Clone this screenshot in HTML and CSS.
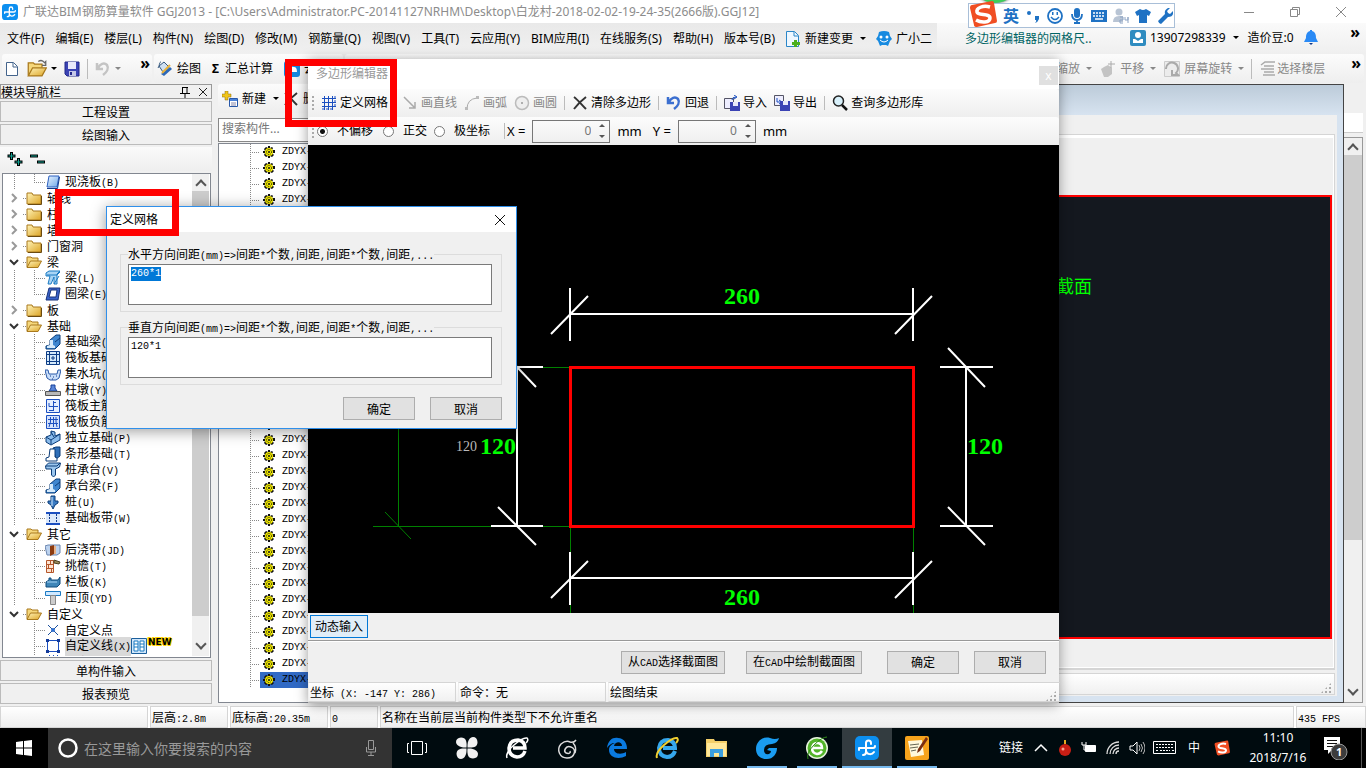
FILE: index.html
```html
<!DOCTYPE html>
<html lang="zh-CN">
<head>
<meta charset="utf-8">
<title>广联达BIM钢筋算量软件 GGJ2013</title>
<link rel="stylesheet" href="styles.css">
</head>
<body>
<svg class="defs" aria-hidden="true">
  <linearGradient id="gBlue" x1="0" y1="0" x2="1" y2="1"><stop offset="0" stop-color="#e8f3ff"/><stop offset="1" stop-color="#6fa8e8"/></linearGradient>
  <linearGradient id="gFold" x1="0" y1="0" x2="1" y2="1"><stop offset="0" stop-color="#fff3b8"/><stop offset="1" stop-color="#dda526"/></linearGradient>
  <symbol id="folder" viewBox="0 0 16 16"><path d="M1 3h5l1 2h8v9H1z" fill="url(#gFold)" stroke="#a9791c"/><path d="M2 14.5h13.5V6" fill="none" stroke="#6b4a10"/></symbol>
  <symbol id="folder-open" viewBox="0 0 16 16"><path d="M1 13V3h4l1 1h6v3" fill="#f5d77b" stroke="#a9791c"/><path d="M1 13.5 4.500 7H15.500L12 13.500z" fill="url(#gFold)" stroke="#a9791c"/></symbol>
  <symbol id="slab" viewBox="0 0 16 16"><path d="M4 2h10l-2 11H2z" fill="url(#gBlue)" stroke="#2a5fc0"/><path d="M2 14.500h10.500L14.500 3" fill="none" stroke="#123a8a"/></symbol>
  <symbol id="beam" viewBox="0 0 16 16"><path d="M1 3l3-2h11l-3 3v10H9V7L6 14H3l2-8H1z" fill="#a8d4f5" stroke="#1b7ac2"/><path d="M2 5h10l3-3M9 14l5-8" stroke="#1b7ac2" fill="none"/></symbol>
  <symbol id="ring" viewBox="0 0 16 16"><path d="M4 2h11l-2 12H1z" fill="#3a62c8" stroke="#16327c"/><path d="M6 4h6l-1 7H4z" fill="#fff" stroke="#16327c"/></symbol>
  <symbol id="found" viewBox="0 0 16 16"><path d="M1 15v-3l4-1V6l6-5h4v9l-5 5z" fill="#3f86cf" stroke="#0b3c78"/><path d="M2 14v-2l3-1V6h3v5l2 1v2z" fill="#d5eafb"/><path d="M10 8l5-4" stroke="#0b3c78"/></symbol>
  <symbol id="raft" viewBox="0 0 16 16"><path d="M1.500 1.500h13v13h-13zM4.500 1v14M11.500 1v14M1 4.500h14M1 11.500h14M6 8h4M8 6v4" fill="#d5eafb" stroke="#0e3d86"/></symbol>
  <symbol id="pit" viewBox="0 0 16 16"><path d="M0 4h3l1 4h8l1-4h3l-2 8-3 2H5l-3-2z" fill="#c9defa" stroke="#2858a8"/><path d="M5 10h1m2 1h1m2-1h1m-5 3h1" stroke="#123a8a"/></symbol>
  <symbol id="pier" viewBox="0 0 16 16"><path d="M6 3h4v3l2 3H4l2-3z" fill="#5a86d8" stroke="#16409a"/><path d="M.5 9.500h15v4H.500z" fill="#b8b8b8" stroke="#555"/></symbol>
  <symbol id="rebar-a" viewBox="0 0 16 16"><path d="M1.500 1.500h13v13h-13z" fill="#e3eeff" stroke="#1b4fc0"/><path d="M8.500 3v10M4 5v3.500h9M4 12.500h5M8 4.500h3" fill="none" stroke="#1b4fc0"/></symbol>
  <symbol id="rebar-b" viewBox="0 0 16 16"><path d="M1.500 1.500h13v13h-13z" fill="#d4e2fb" stroke="#1b4fc0"/><path d="M3 5.500h10M3 9.500h10M5.500 3v5L4 13M11 3v5l1 5M8.500 3v10" fill="none" stroke="#1b4fc0"/></symbol>
  <symbol id="isolated" viewBox="0 0 16 16"><path d="M1 7l5-2V1l4 1v4l5-2v6l-9 5-5-3z" fill="#8bbcec" stroke="#0b3c78"/><path d="M1 7l5 3 9-6M6 10v4M6 2l3 5" stroke="#0b3c78" fill="none"/></symbol>
  <symbol id="strip" viewBox="0 0 16 16"><path d="M8 2l3-1h4v9l-4 3z" fill="#2f6fb8" stroke="#0b3c78"/><path d="M1 15v-3l3-1 1-8h5v8l2 1v3z" fill="#fff" stroke="#0b3c78"/></symbol>
  <symbol id="cap" viewBox="0 0 16 16"><path d="M0.500 4l3-3h12l-1 4-4 2v6l-2 2-2-2V7H1z" fill="#9cc7ee" stroke="#0b3c78"/><path d="M1 4h11l3-3" fill="none" stroke="#0b3c78"/></symbol>
  <symbol id="pile" viewBox="0 0 16 16"><path d="M6 2h4v5h3v2l-3 2-2 4-2-4-3-2V7h3z" fill="#3b7cc4" stroke="#0b3c78"/><path d="M7 3v9" stroke="#d5eafb"/></symbol>
  <symbol id="band" viewBox="0 0 16 16"><path d="M1 3h14M1 14h14" stroke="#1b4fc0" stroke-width="2"/><path d="M1 4h14v9H1z" fill="#dce9fb"/><path d="M4.500 4v9M11.500 4v9" stroke="#123a8a" stroke-dasharray="2 1"/></symbol>
  <symbol id="pour" viewBox="0 0 16 16"><path d="M0 4l3-1h12v8l-3 2H2z" fill="#bcd2ee" stroke="#6b86b0"/><path d="M5 4l4-1v9l-4 2z" fill="#8c3b10"/><path d="M9 4h2v8H9z" fill="#e7b28a"/></symbol>
  <symbol id="eave" viewBox="0 0 16 16"><path d="M1.500 2.500h7v12h-7zM1 6.500h8M1 10.500h8M5.500 2v4M3.500 6v4M6.500 10v4" fill="#fde3d0" stroke="#b5562a"/><path d="M9 2l6 2-1 2-5-1z" fill="#9a8a5a" stroke="#4c4020"/></symbol>
  <symbol id="rail" viewBox="0 0 16 16"><path d="M1 8l3-2V4h2v2h7l2-3v7l-3 3H1z" fill="#3f86b8" stroke="#0f4b7c"/><path d="M2 8h10" stroke="#a8d4f5"/></symbol>
  <symbol id="coping" viewBox="0 0 16 16"><path d="M.5 1.500h15v4H.500z" fill="#cfe8ff" stroke="#1b7ac2"/><path d="M5.500 5.500h5v9h-5z" fill="#ccc" stroke="#888"/></symbol>
  <symbol id="pt" viewBox="0 0 16 16"><path d="M3 3l10 10M13 3L3 13" stroke="#1b4f9c"/><circle cx="8" cy="8" r="2" fill="#2f6fd0"/></symbol>
  <symbol id="polyl" viewBox="0 0 16 16"><path d="M2.500 2.500h11v11h-11z" fill="none" stroke="#1b4fc0"/><path d="M1 1h3v3H1zM12 1h3v3h-3zM1 12h3v3H1zM12 12h3v3h-3z" fill="#123a9a"/></symbol>
  <symbol id="area" viewBox="0 0 16 16"><path d="M1 5l4-4M5 5l4-4M9 5l4-4M1 10l8-8M5 12l10-10" stroke="#1b4fc0"/></symbol>
  <symbol id="gear" viewBox="0 0 12 12"><path d="M5 0h2v2l2-1 1 1-1 2h3v3h-3l2 2-2 2-2-1v2H5v-2l-2 1-2-2 1-2H0V5h2L1 3l2-2 2 1z" fill="#111"/><circle cx="6" cy="6" r="4" fill="#f4ec00"/><circle cx="6" cy="6" r="2.500" fill="none" stroke="#111" stroke-dasharray="1 1"/><circle cx="6" cy="6" r="1" fill="#111"/></symbol>
  <symbol id="glo" viewBox="0 0 24 24"><rect width="24" height="24" rx="5" fill="#0c8ff0"/><path d="M16 8V7a2.500 2.500 0 0 0-5 0V16a3 3 0 0 1-3 3M4 12h14q2 0 2-2M4 12v2M11 15c1 4 6 4 8 1" fill="none" stroke="#fff" stroke-width="2" stroke-linecap="round"/></symbol>
  <symbol id="sogou" viewBox="0 0 28 28"><path d="M3 5 23 1q2 0 2 2l3 18q0 2-2 2L8 27q-3 0-3-2L1 8q0-3 2-3z" fill="#f04e23"/><path d="M21 7C14 5 7 8 8 12s13 1 13 6-9 5-14 2" fill="none" stroke="#fff" stroke-width="3.500"/></symbol>
  <symbol id="disk" viewBox="0 0 16 16"><path d="M1 1h14v14H3l-2-2z" fill="#3b43b4" stroke="#23288a"/><path d="M4 1h8v7H4z" fill="#e8e8fa"/><path d="M5 10h7v5H5z" fill="#c5c8e8"/><path d="M6 11h2v3H6z" fill="#23288a"/></symbol>
  <symbol id="undo" viewBox="0 0 16 16"><path d="M2 2v6h6M3 7C5 3 9 1 12 4c2 3 0 7-4 10" fill="none" stroke="currentColor" stroke-width="2.500"/></symbol>
  <symbol id="cross" viewBox="0 0 16 16"><path d="M2 2c3 2 8 8 12 12M14 2C10 5 5 10 2 14" fill="none" stroke="#333" stroke-width="2"/></symbol>
</svg>

<header class="titlebar">
  <svg class="i16" viewBox="0 0 24 24"><use href="#glo"/></svg>
  <h1>广联达BIM钢筋算量软件 GGJ2013 - [C:\Users\Administrator.PC-20141127NRHM\Desktop\白龙村-2018-02-02-19-24-35(2666版).GGJ12]</h1>
  <div class="wincontrols">
    <button aria-label="最小化"><svg class="i12" viewBox="0 0 12 12"><path d="M1 6.500h10"/></svg></button>
    <button aria-label="还原"><svg class="i12" viewBox="0 0 12 12"><path d="M1.500 3.500h7v7h-7zM3.500 3V1.500h7v7H9"/></svg></button>
    <button aria-label="关闭"><svg class="i12" viewBox="0 0 12 12"><path d="M1 1l10 10M11 1L1 11"/></svg></button>
  </div>
</header>

<nav class="menubar">
  <div class="menus">
    <button>文件(F)</button><button>编辑(E)</button><button>楼层(L)</button><button>构件(N)</button><button>绘图(D)</button><button>修改(M)</button><button>钢筋量(Q)</button><button>视图(V)</button><button>工具(T)</button><button>云应用(Y)</button><button>BIM应用(I)</button><button>在线服务(S)</button><button>帮助(H)</button><button>版本号(B)</button>
    <button class="ico"><svg class="i16" viewBox="0 0 16 16"><path d="M1.500.500h8l4 4v11h-12z" fill="#eef7ff" stroke="#2a86c8"/><path d="M9 1v4h4" fill="none" stroke="#2a86c8"/><path d="M9 9h3v2h3v3h-3v2H9v-2H7v-3h2z" fill="#4caf1c"/></svg>新建变更<i class="arrow"></i></button>
    <button class="ico"><svg class="i16" viewBox="0 0 16 16"><path d="M3 1q5-2 10 0l1 4 2 3-2 2-2 5-2-1H6l-2 1-2-5-2-2 2-3z" fill="#178ae0"/><circle cx="5" cy="6" r="1.500" fill="#fff"/><circle cx="11" cy="6" r="1.500" fill="#fff"/><path d="M4 9q4 4 8 0" stroke="#fff" fill="none"/></svg>广小二</button>
  </div>
  <div class="account">
    <a href="#" class="tip">多边形编辑器的网格尺..</a>
    <button class="ico"><svg class="i16" viewBox="0 0 16 16"><rect width="16" height="16" rx="2" fill="#2f8cc0"/><circle cx="8" cy="5" r="3" fill="#fff"/><path d="M3 13V9h2l3 2 3-2h2v4z" fill="#fff"/></svg>13907298339<i class="arrow"></i></button>
    <span>造价豆:0</span>
    <svg class="i16" viewBox="0 0 16 16"><path d="M7 0h2v1c4 1 4 5 4 7l2 4H1l2-4c0-2 0-6 4-7z" fill="#2a8af5"/><path d="M6 13h4l-2 2z" fill="#123a8a"/></svg>
    <b class="more">»</b>
  </div>
</nav>

<div class="toolbar">
  <div class="band files">
    <button aria-label="新建"><svg class="i16" viewBox="0 0 16 16"><path d="M2.500 1.500h7l4 4v9h-11z" fill="#fff" stroke="#44648c"/><path d="M9 2v4h4" fill="none" stroke="#44648c"/></svg></button>
    <button class="ico" aria-label="打开"><svg class="i20" viewBox="0 0 16 16"><use href="#folder-open"/><path d="M9 2q3-2 5 1l1-1v3h-3" fill="none" stroke="#666"/></svg><i class="arrow"></i></button>
    <button aria-label="保存"><svg class="i16" viewBox="0 0 16 16"><use href="#disk"/></svg></button>
    <i class="sep"></i>
    <button class="ico dis" aria-label="撤销"><svg class="i16" viewBox="0 0 16 16"><use href="#undo"/></svg><i class="arrow"></i></button>
    <b class="more">»</b>
  </div>
  <div class="band">
    <button class="ico"><svg class="i16" viewBox="0 0 16 16"><path d="M2 5l5-4 5 5-6 5z" fill="#cfe0f2" stroke="#35587e"/><path d="M1 7c2-3 1-6 3-6" stroke="#35587e" fill="none"/><path d="M4 13l3 2 8-7-2-2z" fill="#2d68b8"/><path d="M5 12l8-8" stroke="#e9b23a" stroke-width="2"/></svg>绘图</button>
    <button class="ico sum"><b>Σ</b>汇总计算</button>
    <button class="ico"><svg class="i16" viewBox="0 0 16 16"><rect width="16" height="16" rx="3" fill="#1489e0"/><path d="M3 11q0-3 3-3 1-3 4-2 3 0 3 5z" fill="#fff"/></svg>云计算</button>
  </div>
  <div class="band view dis">
    <button class="ico">缩放<i class="arrow"></i></button>
    <button class="ico"><svg class="i16" viewBox="0 0 16 16"><path d="M1 8l3-2 4-2 4 3v6l-4 3H4z" fill="#c3c3c3"/><path d="M11 0v7M8 3h7" stroke="#aaa"/></svg>平移<i class="arrow"></i></button>
    <button class="ico"><svg class="i16" viewBox="0 0 16 16"><path d="M.5.500h15v15H.500z" fill="#ececec" stroke="#ccc"/><path d="M2 8a6 6 0 1 1 10 4l2 2H8V9" fill="none" stroke="#aaa" stroke-width="2"/></svg>屏幕旋转<i class="arrow"></i></button>
    <i class="sep"></i>
    <button class="ico floor"><svg class="i16" viewBox="0 0 16 16"><path d="M1 4l4-3h10M4 5h10M1 8h13M4 11h10M3 14h12" stroke="#aaa" stroke-width="1.500" fill="none"/></svg>选择楼层</button>
    <b class="more">»</b>
  </div>
</div>

<main class="work">
  <aside class="nav song">
    <div class="navhead"><span>模块导航栏</span><svg class="i12" viewBox="0 0 12 12"><path d="M3.500 1v6M8 1v6M3 1.500h6M1 7.500h10M6 8v4" stroke="#000" fill="none"/></svg><svg class="i12" viewBox="0 0 12 12"><path d="M2 2l8 8M10 2l-8 8" stroke="#222"/></svg></div>
    <button class="section">工程设置</button>
    <button class="section">绘图输入</button>
    <div class="navtools">
      <svg viewBox="0 0 40 16"><path d="M5.500 1v8M1.500 5h8M12.500 7v8M8.500 11h8M24 5h8M31 11h8" stroke="#000" stroke-width="3"/><path d="M5.500 2v6M2.500 5h6M12.500 8v6M9.500 11h6M25 5h6M32 11h6" stroke="#10a090" stroke-width="1"/></svg>
    </div>
    <div class="treebox">
      <ul class="tree" id="tree"></ul>
      <div class="vscroll"><i class="up"></i><i class="thumb"></i><i class="down"></i></div>
    </div>
    <button class="section">单构件输入</button>
    <button class="section">报表预览</button>
  </aside>

  <section class="members">
    <div class="band memtools">
      <button class="ico"><svg class="i16" viewBox="0 0 16 16"><path d="M3 0h3v3h3v3H6v3H3V6H0V3h3z" fill="#f0c419" stroke="#8a6a10" stroke-width=".5"/><path d="M7.500 7.500h8v8h-8z" fill="#fff" stroke="#2858a8"/><path d="M8 8h7v2H8z" fill="#4a82d8"/><path d="M9 12h5M9 14h5" stroke="#88a"/></svg>新建<i class="arrow"></i></button>
      <button class="ico"><svg class="i16" viewBox="0 0 16 16"><use href="#cross"/></svg>删除</button>
    </div>
    <input class="search" type="text" placeholder="搜索构件..." aria-label="搜索构件">
    <ul class="memlist song" id="members"></ul>
  </section>

  <section class="section-win">
    <div class="inner">
      <div class="frame"><div class="preview">参数化截面</div></div>
      <div class="foot"></div>
    </div>
  </section>
  <div class="edge"><div class="vscroll"><i class="up"></i><i class="thumb"></i><i class="down"></i></div></div>
</main>

<footer class="status song">
  <span class="c1"></span><span class="c2">层高<span class="hw">:2.8m</span></span><span class="c3">底标高<span class="hw">:20.35m</span></span><span class="c4"><span class="hw">0</span></span><span class="c5">名称在当前层当前构件类型下不允许重名</span><span class="c6"><span class="hw">435 FPS</span></span>
</footer>

<div class="taskbar">
  <button class="start" aria-label="开始"><svg class="i16" viewBox="0 0 16 16"><path d="M0 2l7-1v6.500H0zM8 1l8-1v7.500H8zM0 8.500h7V15l-7-1zM8 8.500h8V16l-8-1z" fill="#fff"/></svg></button>
  <label class="cortana"><svg class="i20" viewBox="0 0 20 20"><circle cx="10" cy="10" r="8.500" fill="none" stroke="#fff" stroke-width="2.500"/></svg><input type="text" placeholder="在这里输入你要搜索的内容"><svg class="i16" viewBox="0 0 16 16"><path d="M5.500.500h5v9h-5zM3.500 7v5h9V7M8 12v3M5 15.500h6" fill="none" stroke="#999"/></svg></label>
  <div class="apps">
    <button aria-label="任务视图"><svg class="i20" viewBox="0 0 20 20"><path d="M4.500 3.500h11v13h-11zM2 5.500H.500v9H2M18 5.500h1.500v9H18" fill="none" stroke="#fff"/></svg></button>
    <button aria-label="应用"><svg class="i24" viewBox="0 0 24 24"><g fill="#f1f1f1"><path d="M11.500 11.500C5 12 1 9 1 6q0-4 5-4.500c5 0 6 4 5.500 10z"/><path d="M12.500 11.500C12 5 15 1 18 1q4 0 4.500 5c0 5-4 6-10 5.500z"/><path d="M12.500 12.500C19 12 23 15 23 18q0 4-5 4.500c-5 0-6-4-5.500-10z"/><path d="M11.500 12.500C12 19 9 23 6 23q-4 0-4.500-5c0-5 4-6 10-5.500z"/></g></svg></button>
    <button aria-label="浏览器"><svg class="i24" viewBox="0 0 24 24"><path d="M20 15q-2 6-8 6-8-1-8-9 1-8 9-8 7 1 7 8H8" fill="none" stroke="#fff" stroke-width="3.500"/><path d="M2 22q-2-5 7-13T22 2q2 2-1 5" fill="none" stroke="#fff" stroke-width="1.500"/></svg></button>
    <button aria-label="应用"><svg class="i24" viewBox="0 0 24 24"><path d="M21 4q-2 3-6 2-4-2-9 2c-5 6-1 14 6 14 8 0 10-9 4-11-5-2-8 4-5 6 3 1 5 0 4-2M18 7q4 4 2 10" fill="none" stroke="#ddd" stroke-width="1.500"/></svg></button>
    <button aria-label="Edge"><svg class="i24" viewBox="0 0 24 24"><path d="M2 12C3 4 8 1 13 2c6 0 9 5 9 11H9c0 5 7 6 12 3v4c-7 4-17 2-17-6 0-4 3-6 6-7-4 0-6 2-8 5zm7-2h8c0-5-7-5-8 0z" fill="#0a7ae0"/></svg></button>
    <button aria-label="IE"><svg class="i24" viewBox="0 0 24 24"><path d="M20 15q-2 6-8 6-8-1-8-9 1-8 9-8 7 1 7 8H8" fill="none" stroke="#35a8ee" stroke-width="4"/><path d="M2 22q-2-5 7-13T22 2q2 2-1 5" fill="none" stroke="#f0cf30" stroke-width="2"/></svg></button>
    <button aria-label="文件资源管理器"><svg class="i24" viewBox="0 0 24 24"><path d="M1 3h8l1 2h12v16H1z" fill="#f3cf6a"/><path d="M2 7h19v13H2z" fill="#ffe89a"/><path d="M5 21v-8h13v8h-4v-4H9v4z" fill="#3b9fe0"/></svg></button>
    <button class="run" aria-label="浏览器"><svg class="i24" viewBox="0 0 24 24"><path d="M24 2q-1 5-7 6-8 0-8 6 0 5 5 4 2-1 2-3l-4-1 2-2h8c0 6-4 11-10 11C5 23 1 19 1 13 1 5 8 0 15 2q5 2 9 0z" fill="#1a9cf0"/></svg></button>
    <button class="run" aria-label="360浏览器"><svg class="i24" viewBox="0 0 24 24"><circle cx="12" cy="12" r="11" fill="#e8f5e0"/><circle cx="12" cy="12" r="9.500" fill="#53b42a"/><path d="M17 15q-2 3-5 3-5-1-5-6 1-5 5-5 5 0 5 5H8" fill="none" stroke="#fff" stroke-width="2.500"/><path d="M3 23Q1 17 9 9T22 1" fill="none" stroke="#2d8a16"/></svg></button>
    <button class="run on" aria-label="广联达"><svg class="i24" viewBox="0 0 24 24"><use href="#glo"/></svg></button>
    <button class="run" aria-label="画图"><svg class="i24" viewBox="0 0 24 24"><rect width="24" height="24" rx="2" fill="#f6a31c"/><path d="M3 5l14-1 2 15-13 2z" fill="#fff8dc"/><path d="M5 9l9-1M5 12l8-1M6 15l5-1" stroke="#665"/><path d="M12 17l1-4L21 1l2 2-8 12z" fill="#7a2e12"/></svg></button>
  </div>
  <div class="tray">
    <span class="links">链接</span>
    <svg class="i16" viewBox="0 0 16 16"><path d="M2 11l6-6 6 6" fill="none" stroke="#fff" stroke-width="1.500"/></svg>
    <svg class="i16" viewBox="0 0 16 16"><circle cx="8" cy="10" r="6" fill="#c81e14"/><path d="M7 0h2v4H7z" fill="#e5a820"/><circle cx="6" cy="9" r="1.500" fill="#f7a090"/></svg>
    <svg class="i16" viewBox="0 0 16 16"><path d="M4.500 5.500h10v6h-10zM6 7h7v3H6z" fill="#fff" stroke="#fff"/><path d="M1 2v3h4V2M3 5v5h2" fill="none" stroke="#fff"/></svg>
    <svg class="i16" viewBox="0 0 16 16"><path d="M2 14A12 12 0 0 1 14 2M5 14a9 9 0 0 1 9-9M8 14a6 6 0 0 1 6-6M11 14a3 3 0 0 1 3-3" fill="none" stroke="#ddd" stroke-width="1.300"/></svg>
    <svg class="i16" viewBox="0 0 16 16"><path d="M1 6h3l4-4v12l-4-4H1z" fill="none" stroke="#fff"/><path d="M10 5q2 3 0 6M12 4q3 4 0 8M14 2q4 6 0 12" fill="none" stroke="#bbb"/></svg>
    <svg class="kbd" viewBox="0 0 24 14"><path d="M.5.500h22v12H.500z" fill="none" stroke="#fff"/><path d="M3 3.500h18M3 6.500h18M3 9.500h2m2 0h10m2 0h2" stroke="#fff" stroke-dasharray="2 1"/></svg>
    <span class="ime">中</span>
    <svg class="i16" viewBox="0 0 28 28"><use href="#sogou"/></svg>
  </div>
  <time class="clock">11:10<br>2018/7/16</time>
  <button class="notify" aria-label="通知"><svg class="i24" viewBox="0 0 24 24"><path d="M0 1h16v13H8l-4 4v-4H0z" fill="#fff"/><path d="M3 4.500h10M3 7.500h10M3 10.500h6" stroke="#111"/><circle cx="15" cy="16" r="8" fill="#3c3c3c" stroke="#999"/><text x="12" y="20" class="badge">1</text></svg></button>
</div>

<div class="orb"></div>
<div class="ime-bar">
  <svg class="logo" viewBox="0 0 28 28"><use href="#sogou"/></svg>
  <b>英</b>
  <svg class="i16" viewBox="0 0 16 16"><circle cx="4" cy="5" r="2"/><path d="M10 8h4v3q-1 3-4 4 2-2 1-3h-1z"/></svg>
  <svg class="i16" viewBox="0 0 16 16"><circle cx="8" cy="8" r="7" fill="none" stroke="#1f72c4" stroke-width="1.800"/><path d="M5 4h1.500v3H5zM9.500 4H11v3H9.500z"/><path d="M4 9q4 5 8 0" fill="none" stroke="#1f72c4" stroke-width="1.500"/></svg>
  <svg class="i16" viewBox="0 0 16 16"><rect x="5" y="0" width="6" height="10" rx="3"/><path d="M3 6q0 6 5 6t5-6M8 12v3M5 15h6" fill="none" stroke="#1f72c4" stroke-width="1.800"/></svg>
  <svg class="i16" viewBox="0 0 16 16"><path d="M0 2h16v12H0z"/><path d="M2 5h12M2 8h12" stroke="#fff" stroke-width="1.500" stroke-dasharray="2 1"/><path d="M4 11h8" stroke="#fff" stroke-width="1.500"/></svg>
  <svg class="i16 pale" viewBox="0 0 16 16"><circle cx="6" cy="4" r="3.500"/><path d="M0 14q0-6 6-6h4v6z"/><path d="M7 9h3v3H7v3h3m2-6v3h3V9v6" fill="none" stroke="#8da4c4"/></svg>
  <svg class="i16" viewBox="0 0 16 16"><path d="M5 1q3 2 6 0l5 3-2 4-2-1v8H4V7L2 8 0 4z"/></svg>
  <svg class="i16" viewBox="0 0 16 16"><path d="M1 13l7-7q-1-4 3-6h2l-3 3 1 2 2 1 3-3q1 6-5 6l-7 7q-2 0-3-3z"/></svg>
</div>

<section class="poly" aria-label="多边形编辑器">
  <div class="poly-title"><span>多边形编辑器</span><button aria-label="关闭">x</button></div>
  <div class="band poly-tools">
    <i class="grip"></i>
    <button class="ico"><svg class="i16" viewBox="0 0 16 16"><path d="M3.500 1v14M7.500 1v14M11.500 1v14M1 3.500h14M1 7.500h14M1 11.500h14" stroke="#1b4fc0" fill="none"/><path d="M14 1v12M1 14h12" stroke="#1b4fc0" stroke-dasharray="2 2"/></svg>定义网格</button>
    <button class="ico dis lead"><svg class="i16" viewBox="0 0 16 16"><path d="M2 2l11 11M13 7v6H7" stroke="#aaa" fill="none" stroke-width="1.500"/></svg>画直线</button>
    <button class="ico dis"><svg class="i16" viewBox="0 0 16 16"><path d="M3 14Q3 4 13 3" stroke="#aaa" fill="none"/><path d="M1 12h3v3H1zM12 1h3v3h-3z" fill="#bbb"/></svg>画弧</button>
    <button class="ico dis"><svg class="i16" viewBox="0 0 16 16"><circle cx="8" cy="8" r="6.500" stroke="#bbb" fill="#eee" stroke-width="1.500"/><circle cx="8" cy="8" r="1" fill="#999"/></svg>画圆</button>
    <i class="sep"></i>
    <button class="ico"><svg class="i16" viewBox="0 0 16 16"><use href="#cross"/></svg>清除多边形</button>
    <i class="sep"></i>
    <button class="ico undo"><svg class="i16" viewBox="0 0 16 16"><use href="#undo"/></svg>回退</button>
    <i class="sep"></i>
    <button class="ico"><svg class="i16" viewBox="0 0 16 16"><path d="M.5 3.500h9v10h-9z" fill="#eef" stroke="#556"/><path d="M8 5q0-3 4-3M10 0l3 2-3 2" fill="none" stroke="#1b4fc0"/><path d="M6 7h10v9H6z" fill="#3b43b4"/><path d="M9 7h5v4H9z" fill="#e8e8fa"/></svg>导入</button>
    <button class="ico"><svg class="i16" viewBox="0 0 16 16"><path d="M.5.500h9v10h-9z" fill="#eef" stroke="#556"/><path d="M3 3v4h4M5 5l3 2-3 2" fill="none" stroke="#1b4fc0"/><path d="M6 6h10v10H6z" fill="#3b43b4"/><path d="M9 6h5v4H9z" fill="#e8e8fa"/></svg>导出</button>
    <i class="sep"></i>
    <button class="ico"><svg class="i16" viewBox="0 0 16 16"><circle cx="6.500" cy="6" r="5" fill="#d8f0fa" stroke="#222" stroke-width="1.500"/><path d="M10 10l5 5" stroke="#111" stroke-width="2.500"/></svg>查询多边形库</button>
  </div>
  <div class="band poly-opts">
    <i class="grip"></i>
    <label class="w1"><input type="radio" name="off" checked>不偏移</label>
    <label class="w2"><input type="radio" name="off">正交</label>
    <label class="w3"><input type="radio" name="off">极坐标</label>
    <i class="sep"></i>
    <label class="num">X =<span class="spin"><input type="text" value="0"><i class="su"></i><i class="sd"></i></span>mm</label>
    <label class="num">Y =<span class="spin"><input type="text" value="0"><i class="su"></i><i class="sd"></i></span>mm</label>
  </div>
  <div class="canvas">
    <svg viewBox="308 145 751 468" preserveAspectRatio="xMidYMid meet">
      <g stroke="#008000" fill="none"><path d="M373 526.500H570M517 367.500H570M398.500 367V526M385 512L411 539M570.500 526V613M913.500 526V613"/></g>
      <g stroke="#fff" stroke-width="2" fill="none"><path d="M570 314H913M570 288V341M913 288V341M588 296L551 334M932 296L895 334"/><path d="M570 578H913M570 552V605M913 552V605M588 561L551 598M932 561L895 598"/><path d="M966 367V526M940 367H993M940 526H993M948 348L985 387M948 507L985 545"/><path d="M517 367V526M491 367H543M491 526H543M499 348L536 387M498 507L536 545"/></g>
      <rect x="570.500" y="367.500" width="343" height="159" fill="none" stroke="#f00" stroke-width="3"/>
      <g class="dim"><text x="724" y="304">260</text><text x="724" y="605">260</text><text x="480" y="454">120</text><text x="967" y="454">120</text></g>
      <text class="dim-s" x="456" y="451">120</text>
    </svg>
  </div>
  <div class="dyn"><button>动态输入</button></div>
  <div class="poly-btns song">
    <button class="btn">从<span class="hw">CAD</span>选择截面图</button><button class="btn">在<span class="hw">CAD</span>中绘制截面图</button><button class="btn wide first">确定</button><button class="btn wide">取消</button>
  </div>
  <div class="poly-status song"><span>坐标<span class="hw"> (X: -147 Y: 286)</span></span><span>命令：无</span><span>绘图结束</span></div>
</section>

<form class="dialog">
  <div class="dlg-title"><span>定义网格</span><button type="button" aria-label="关闭"><svg class="i12" viewBox="0 0 12 12"><path d="M1 1l10 10M11 1L1 11" stroke="#111"/></svg></button></div>
  <div class="dlg-body song">
    <fieldset><legend>水平方向间距<span class="hw">(mm)=&gt;</span>间距<span class="hw">*</span>个数<span class="hw">,</span>间距<span class="hw">,</span>间距<span class="hw">*</span>个数<span class="hw">,</span>间距<span class="hw">,...</span></legend><textarea id="hspace" aria-label="水平方向间距">260*1</textarea></fieldset>
    <fieldset><legend>垂直方向间距<span class="hw">(mm)=&gt;</span>间距<span class="hw">*</span>个数<span class="hw">,</span>间距<span class="hw">,</span>间距<span class="hw">*</span>个数<span class="hw">,</span>间距<span class="hw">,...</span></legend><textarea aria-label="垂直方向间距">120*1</textarea></fieldset>
    <div class="dlg-btns"><button type="button" class="btn wide">确定</button><button type="button" class="btn wide">取消</button></div>
  </div>
</form>

<div class="mark mark-tool"></div>
<div class="mark mark-title"></div>
<script src="script.js"></script>
</body>
</html>
```

FILE: styles.css
```css
* { box-sizing: border-box; }
:root {
  --ui: "Noto Sans", "Noto Sans CJK SC", sans-serif;
  --song: "Noto Sans CJK SC", sans-serif;
}
html, body { margin: 0; height: 100%; overflow: hidden; }
body { display: flex; flex-direction: column; position: relative; background: #f0f0f0; font: 12px/16px var(--ui); color: #000; }
button, input, textarea { font: inherit; color: inherit; }
button { border: 0; background: none; padding: 0; white-space: nowrap; }
ul { list-style: none; margin: 0; padding: 0; }
svg { display: block; flex: none; }
.defs { position: absolute; width: 0; height: 0; }
.i12 { width: 12px; height: 12px; }
.i16 { width: 16px; height: 16px; }
.i20 { width: 20px; height: 20px; }
.i24 { width: 24px; height: 24px; }
.song { font-family: var(--song); }
.hw { font-family: "Liberation Mono", monospace; font-size: 10px; white-space: pre; }
.ico { display: flex; align-items: center; gap: 4px; }
.arrow { border: 3px solid transparent; border-top-color: currentColor; border-bottom: 0; margin-left: 3px; }
.sep { width: 1px; height: 20px; background: #bbb; }
.more { font-size: 16px; line-height: 12px; }
.dis { color: #888; }
.dis .i16 { color: #c4c4c4; }
.band { display: flex; align-items: center; background: linear-gradient(#fcfcfc, #eee); border-radius: 3px; }

.titlebar { height: 23px; flex: none; display: flex; align-items: center; gap: 5px; padding-left: 2px; background: #fff; }
.titlebar h1 { margin: 0; flex: 1; font-size: 12px; font-weight: 400; color: #8c8c8c; white-space: nowrap; }
.wincontrols { display: flex; gap: 34px; padding-right: 19px; }
.wincontrols svg { fill: none; stroke: #888; }

.menubar { height: 31px; flex: none; display: flex; justify-content: space-between; background: linear-gradient(#e9e9e9, #f0f0f0); padding-left: 7px; }
.menus { display: flex; align-items: center; gap: 11px; white-space: nowrap; }
.menus .ico { margin-left: -1px; }
.account { display: flex; align-items: center; gap: 9px; width: 429px; padding: 0 6px 2px 28px; background: linear-gradient(#fafafa, #efefef); white-space: nowrap; }
.account .tip { width: 156px; color: #006464; text-decoration: none; font-family: var(--song); }
.account .more { margin: 0 0 12px auto; }

.toolbar { height: 30px; flex: none; display: flex; gap: 2px; padding: 0 2px 1px; }
.toolbar .band { gap: 11px; padding: 0 3px; }
.toolbar .sum { gap: 6px; }
.toolbar .files { gap: 7px; width: 150px; padding: 0 2px; }
.toolbar .files .more { margin: 0 0 12px auto; }
.toolbar .files .ico { gap: 1px; }
.toolbar .view { flex: 1; justify-content: flex-end; gap: 8px; }
.toolbar .view .arrow { margin-left: 2px; }
.toolbar .view .floor { gap: 1px; }
.toolbar .view .sep { margin-left: -1px; }
.toolbar .view .more { margin: 0 0 12px 18px; color: #000; }

.work { flex: 1; min-height: 0; display: flex; }
.nav { width: 212px; flex: none; display: flex; flex-direction: column; gap: 2px; padding-bottom: 2px; }
.navhead { height: 15px; display: flex; align-items: center; gap: 6px; border: 1px solid #999; padding-right: 2px; }
.navhead span { flex: 1; line-height: 13px; }
.section { height: 21px; flex: none; border: 1px solid; border-color: #fff #999 #999 #fff; outline: 1px solid #bbb; outline-offset: -1px; background: #f0f0f0; }
.navtools { height: 24px; flex: none; padding: 4px 6px; background: linear-gradient(#fafafa, #eee); }
.navtools svg { width: 40px; height: 16px; }
.treebox { flex: 1; min-height: 0; display: flex; margin: 0 1px 0 2px; padding: 0 1px 1px; border: 1px solid #828790; background: #fff; overflow: hidden; }
.tree { flex: 1; overflow: hidden; padding-left: 4px; }
.tree li { height: 16px; display: flex; align-items: center; white-space: nowrap; }
.tree .exp { width: 12px; height: 12px; fill: none; stroke: #999; stroke-width: 2; }
.tree .open .exp { stroke: #333; }
.tree .stub { width: 3px; height: 16px; margin-left: 3px; background: repeating-linear-gradient(90deg, #888 0 1px, transparent 1px 2px) 0 8px / 100% 1px no-repeat; }
.tree .parent .i16 { margin-right: 5px; }
.tree .trunk { width: 20px; height: 16px; margin-left: 6px; }
.tree .trunk.line { background: repeating-linear-gradient(#888 0 1px, transparent 1px 2px) 0 0 / 1px 100% no-repeat; }
.tree .branch { width: 11px; height: 16px; background: repeating-linear-gradient(#888 0 1px, transparent 1px 2px) 0 0 / 1px 100% no-repeat, repeating-linear-gradient(90deg, #888 0 1px, transparent 1px 2px) 0 8px / 100% 1px no-repeat; }
.tree .last .branch { background-size: 1px 8px, 100% 1px; }
.tree .child .i16 { margin-right: 4px; }
.tree .sel .label { background: #d9d9d9; }
.tree .child .badge16 { margin-right: 1px; }
.tree .new { align-self: flex-start; font: bold 9px/9px "DejaVu Sans", sans-serif; text-shadow: 1px 0 #ffd400, -1px 0 #ffd400, 0 1px #ffd400, 0 -1px #ffd400, 1px 1px #ffd400, -1px -1px #ffd400; }
.vscroll { width: 17px; flex: none; display: flex; flex-direction: column; background: #f0f0f0; }
.vscroll .up, .vscroll .down { height: 17px; flex: none; position: relative; }
.vscroll .up::after, .vscroll .down::after { content: ""; position: absolute; left: 5px; top: 7px; width: 6px; height: 6px; border: solid #555; border-width: 2px 0 0 2px; transform: rotate(45deg); }
.vscroll .down::after { top: 3px; transform: rotate(225deg); }
.vscroll .thumb { background: #cdcdcd; flex: 425; }
.vscroll .down { flex: 40; }
.treebox .down::after { top: auto; bottom: 8px; }

.members { width: 184px; flex: none; margin-left: 6px; display: flex; flex-direction: column; padding-bottom: 3px; }
.memtools { height: 29px; flex: none; gap: 4px; padding-left: 4px; }
.search { height: 24px; flex: none; margin: 5px 0 1px; border: 1px solid #888; background: #fff; padding: 0 3px 4px; width: 100%; border-radius: 0; }
.search::placeholder { color: #777; opacity: 1; }
.memlist { flex: 1; min-height: 0; overflow: hidden; border: 1px solid #828790; background: #fff; }
.memlist li { height: 16px; display: flex; align-items: center; padding-left: 31px; }
.memlist .branch { width: 10px; height: 16px; flex: none; background: repeating-linear-gradient(#888 0 1px, transparent 1px 2px) 0 0 / 1px 100% no-repeat, repeating-linear-gradient(90deg, #888 0 1px, transparent 1px 2px) 0 8px / 100% 1px no-repeat; }
.memlist .name { flex: 1; height: 16px; display: flex; align-items: center; gap: 7px; padding-left: 3px; }
.memlist .sel .name { background: #316ac5; }

.section-win { flex: 1; margin: 0 0 3px 2px; border: 1px solid #444; border-left: 0; padding: 30px 6px 6px 0; background: linear-gradient(#bccbd9, #d7e3f0 30px); display: flex; }
.inner { flex: 1; display: flex; flex-direction: column; background: #f0f0f0; padding: 19px 2px 1px 0; }
.frame { flex: 1; display: flex; border: 1px solid #d5d5d5; border-width: 1px 1px 2px 0; box-shadow: inset 0 3px #fff, inset -1px -1px #fff; padding: 60px 2px 29px 0; }
.preview { flex: 1; border: 2px solid #f00; background: #14181f; color: #0f0; font: 18px/24px var(--song); text-align: right; padding: 76px 238px 0 0; }
.foot { height: 22px; margin-top: 3px; border: 1px solid #d5d5d5; background: linear-gradient(#fff, #f0f0f0); display: flex; }
.foot::after, .poly-status::after { content: ""; width: 12px; height: 12px; background: conic-gradient(#aaa 25%, transparent 0) 2px 2px / 4px 4px; clip-path: polygon(100% 0, 100% 100%, 0 100%); }
.foot::after { margin: auto 1px 1px auto; }
.poly-status::after { margin: auto 1px 1px -16px; }
.edge { width: 22px; flex: none; display: flex; flex-direction: column; padding: 29px 3px 3px 0; }
.edge::before { content: ""; height: 19px; flex: none; background: #fff; border-bottom: 1px solid #ccc; margin-bottom: 4px; }
.edge .vscroll { flex: 1; width: auto; border: 1px solid #999; border-left: 0; }
.edge .thumb { flex: 384; }
.edge .down { flex: 162; }
.edge .vscroll .down::after { top: auto; bottom: 8px; }

.status { height: 22px; flex: none; display: flex; gap: 2px; background: #fff; line-height: 20px; }
.status > span { border: 1px solid #d5d5d5; background: linear-gradient(#fff, #eee); padding-left: 1px; white-space: nowrap; }
.c1 { width: 148px; } .c2 { width: 78px; } .c3 { width: 98px; } .c4 { width: 48px; } .c5 { flex: 1; } .c6 { width: 70px; }

.taskbar { height: 40px; flex: none; display: flex; background: #000b0f; color: #fff; }
.start { width: 48px; background: #000; display: grid; place-items: center; }
.cortana { width: 344px; flex: none; display: flex; align-items: center; gap: 6px; padding: 0 13px 0 10px; background: #333; }
.cortana input { flex: 1; min-width: 0; border: 0; background: none; outline: 0; padding: 0; font: 14px/20px var(--song); }
.cortana input::placeholder { color: #999; opacity: 1; }
.apps { display: flex; }
.apps button { width: 50px; display: grid; place-items: center; border: solid transparent; border-width: 2px 0; }
.apps .run { border-image: linear-gradient(90deg, transparent 10%, #76b9ed 10% 90%, transparent 90%) 2 0 2 0; border-top: 0; padding-top: 2px; }
.apps .on { background: #333c40; border-image: none; border-bottom-color: #76b9ed; }
.tray { flex: 1; display: flex; align-items: center; justify-content: flex-end; gap: 8px; padding-right: 16px; }
.tray .links { margin-right: 2px; }
.kbd { width: 24px; height: 14px; }
.ime { padding: 0 6px 0 3px; }
.clock { width: 64px; text-align: center; font-size: 12px; line-height: 20px; }
.notify { width: 56px; background: #000; display: flex; align-items: center; padding-left: 14px; box-shadow: inset -4px 0 #000, inset -5px 0 #555; }
.badge { font: bold 11px "Open Sans", sans-serif; fill: #fff; }

.orb { position: absolute; right: 347px; top: -45px; width: 48px; height: 48px; border-radius: 50%; background: #3ecf5a; box-shadow: 0 0 3px #555; }
.ime-bar { position: absolute; right: 191px; top: 3px; width: 207px; height: 25px; display: flex; align-items: center; gap: 6px; padding-right: 3px; border: 1px solid #a9bfd8; background: #fff; fill: #1f72c4; color: #1f72c4; }
.ime-bar .logo { width: 28px; height: 28px; margin-top: -3px; }
.ime-bar b { font-size: 16px; width: 16px; }
.ime-bar .pale { fill: #b8c4d4; }

.poly { position: absolute; left: 308px; top: 59px; width: 751px; height: 644px; display: flex; flex-direction: column; background: #f0f0f0; box-shadow: 0 2px 12px rgba(0, 0, 0, .4); }
.poly-title { height: 30px; flex: none; display: flex; justify-content: space-between; align-items: flex-start; background: #fff; color: #999; padding: 7px 1px 0 8px; }
.poly-title button { width: 19px; height: 19px; background: #e0e0e0; color: #fff; line-height: 16px; }
.poly-tools { height: 28px; flex: none; gap: 7px; padding-left: 4px; }
.poly-tools .ico { gap: 3px; }
.poly-tools .lead { margin-left: 7px; }
.poly-tools .sep { height: 14px; }
.poly-tools .undo .i16 { color: #3b6fd0; }
.grip { width: 2px; height: 14px; background: repeating-linear-gradient(#aaa 0 2px, transparent 2px 4px); }
.poly-opts { height: 28px; flex: none; padding-left: 4px; }
.poly-opts label { display: flex; align-items: center; white-space: nowrap; }
.poly-opts input[type=radio] { appearance: none; width: 11px; height: 11px; margin: 0 9px 0 0; border: 1px solid #777; border-radius: 50%; background: #fff; }
.poly-opts input[type=radio]:checked { background: radial-gradient(#111 0 2px, #fff 3px); }
.w1 { width: 66px; margin-left: 3px; } .w2 { width: 51px; } .w3 { width: 70px; }
.poly-opts .sep { height: 16px; margin-right: 2px; }
.poly-opts .num { font-size: 13px; gap: 7px; margin-right: 11px; }
.spin { display: grid; grid-template: 1fr 1fr / 1fr 14px; width: 78px; height: 23px; border: 1px solid #777; align-items: center; justify-items: center; }
.spin input { grid-row: 1 / 3; width: 100%; border: 0; background: none; padding: 0 4px; text-align: right; font-size: 12px; color: #777; outline: 0; }
.su, .sd { border: 3px solid transparent; }
.su { border-bottom-color: #555; border-top: 0; }
.sd { border-top-color: #555; border-bottom: 0; }
.canvas { flex: 1; min-height: 0; background: #000; }
.canvas svg { width: 100%; height: 100%; }
.dim { fill: #0f0; font: bold 24px "Liberation Serif", serif; }
.dim-s { fill: #bbb; font: 14px "Liberation Serif", serif; }
.dyn { height: 28px; flex: none; padding: 2px; border-bottom: 1px solid #999; }
.dyn button { height: 23px; padding: 0 4px; border: 1px solid #0078d7; background: #e1eef8; }
.poly-btns { height: 41px; flex: none; display: flex; align-items: center; justify-content: flex-end; padding: 0 13px 0 0; border-top: 1px solid #fff; }
.btn { height: 23px; padding: 0 6px; border: 1px solid #adadad; background: #e1e1e1; }
.btn.wide { width: 72px; padding: 0; }
.poly-btns .btn { margin-left: 15px; }
.poly-btns .btn:nth-child(2) { margin-left: 21px; }
.poly-btns .first { margin-left: 25px; }
.poly-status { height: 21px; flex: none; display: flex; gap: 2px; background: linear-gradient(#fff, #f0f0f0); border-bottom: 1px solid #bbb; }
.poly-status > span { width: 148px; border: 1px solid #d5d5d5; border-left-color: #eee; padding-left: 1px; line-height: 18px; white-space: nowrap; }
.poly-status > span:last-child { border-right: 0; flex: 1; }

.dialog { position: absolute; left: 106px; top: 206px; width: 411px; display: flex; flex-direction: column; border: 1px solid #2f8fea; background: #f0f0f0; box-shadow: 0 2px 14px rgba(0, 0, 0, .4); }
.dlg-title { height: 25px; display: flex; justify-content: space-between; align-items: center; background: #fff; padding: 0 10px 0 3px; }
.dlg-body { display: flex; flex-direction: column; gap: 7px; padding: 14px 14px 8px 13px; }
fieldset { margin: 0; border: 1px solid #dcdcdc; padding: 2px 9px 6px 7px; min-width: 0; }
legend { padding: 0; height: 16px; line-height: 16px; }
textarea { display: block; width: 100%; height: 41px; resize: none; border: 1px solid #7a7a7a; border-radius: 0; outline: 0; padding: 2px; background: #fff; font: 10px/14px "Liberation Mono", monospace; }
textarea::selection { background: #0078d7; color: #fff; }
.dlg-btns { display: flex; justify-content: flex-end; gap: 15px; padding-top: 5px; }

.mark { position: absolute; border: 7px solid #f00; pointer-events: none; }
.mark-tool { left: 285px; top: 59px; width: 112px; height: 68px; }
.mark-title { left: 55px; top: 189px; width: 124px; height: 47px; }
```

FILE: script.js
```js
const rows = [
  ['slab', '现浇板(B)', 'last'],
  ['+', '轴线'], ['+', '柱'], ['+', '墙'], ['+', '门窗洞'],
  ['-', '梁'], ['beam', '梁(L)'], ['ring', '圈梁(E)', 'last'],
  ['+', '板'],
  ['-', '基础'], ['found', '基础梁(F)'], ['raft', '筏板基础(M)'], ['pit', '集水坑(K)'], ['pier', '柱墩(Y)'],
  ['rebar-a', '筏板主筋(R)'], ['rebar-b', '筏板负筋(X)'], ['isolated', '独立基础(P)'], ['strip', '条形基础(T)'],
  ['cap', '桩承台(V)'], ['found', '承台梁(F)'], ['pile', '桩(U)'], ['band', '基础板带(W)', 'last'],
  ['-', '其它'], ['pour', '后浇带(JD)'], ['eave', '挑檐(T)'], ['rail', '栏板(K)'], ['coping', '压顶(YD)', 'last'],
  ['-', '自定义'], ['pt', '自定义点'], ['polyl', '自定义线(X)', 'sel'], ['area', '自定义面']
];
const half = s => s.replace(/[\x20-\x7e]+/g, m => `<span class="hw">${m}</span>`);
const icon = id => `<svg class="i16" viewBox="0 0 16 16"><use href="#${id}"/></svg>`;
let group = 0;
document.getElementById('tree').innerHTML = rows.map(([kind, label, state = '']) => {
  if (kind === '+' || kind === '-') {
    group += 1;
    const open = kind === '-';
    const mark = open ? 'M2 4l4 4 4-4' : 'M4 2l4 4-4 4';
    return `<li class="parent ${open ? 'open' : ''}"><svg class="exp" viewBox="0 0 12 12"><path d="${mark}"/></svg><i class="stub"></i>${icon(open ? 'folder-open' : 'folder')}<span class="label">${half(label)}</span></li>`;
  }
  const extra = state === 'sel'
    ? '<svg class="i16 badge16" viewBox="0 0 16 16"><path d="M.5.500h15v15H.500z" fill="#cfe6fb" stroke="#1b5f9c"/><path d="M3 3h4v10H3zM9 3h4v10H9zM3 6h4m2 0h4M3 9h4m2 0h4" fill="#fff" stroke="#1b7ac2"/></svg><b class="new">NEW</b>'
    : '';
  return `<li class="child ${state}"><i class="trunk ${group < 9 ? 'line' : ''}"></i><i class="branch"></i>${icon(kind)}<span class="label">${half(label)}</span>${extra}</li>`;
}).join('');

document.getElementById('members').innerHTML = Array.from({ length: 34 }, (_, i) =>
  `<li class="${i === 33 ? 'sel' : ''}"><i class="branch"></i><span class="name"><svg class="i12" viewBox="0 0 12 12"><use href="#gear"/></svg><span class="hw">ZDYX-${i + 1}</span></span></li>`
).join('');

const first = document.getElementById('hspace');
first.focus();
first.select();
```
